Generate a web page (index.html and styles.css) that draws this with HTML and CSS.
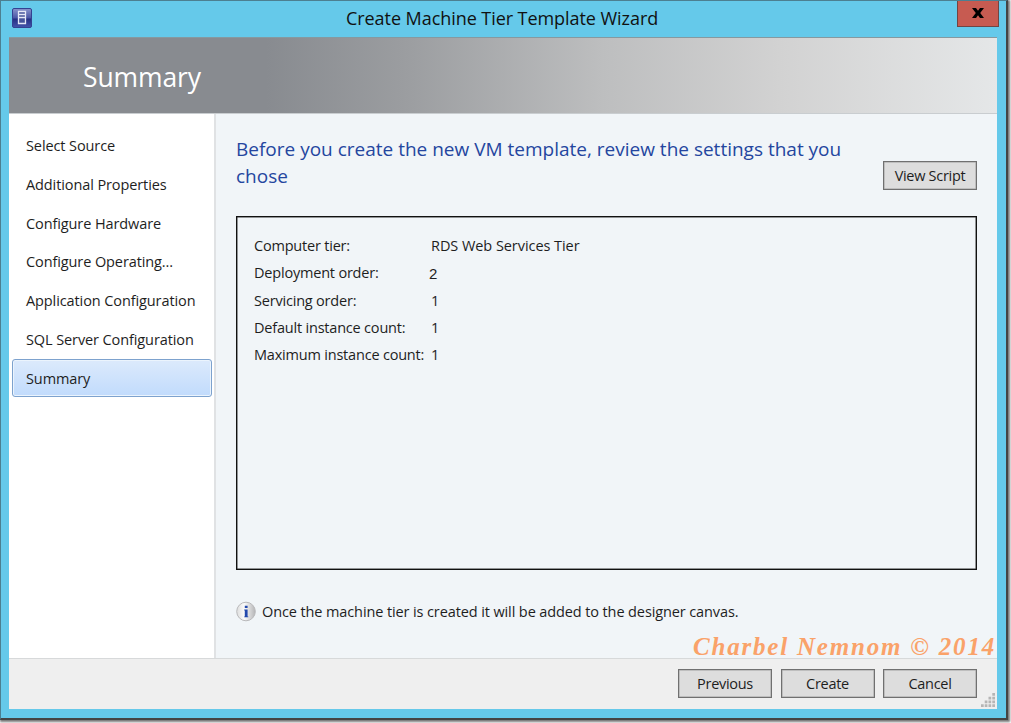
FILE: index.html
```html
<!DOCTYPE html>
<html lang="en">
<head>
<meta charset="utf-8">
<title>Create Machine Tier Template Wizard</title>
<link rel="stylesheet" href="styles.css">
</head>
<body>
<main class="window">
  <header class="titlebar">
    <svg class="app-icon" width="20" height="20" viewBox="0 0 20 20">
      <defs><linearGradient id="ig" x1="0" y1="0" x2="0" y2="1"><stop offset="0" stop-color="#8994cc"/><stop offset=".5" stop-color="#4956a6"/><stop offset=".55" stop-color="#252f83"/><stop offset="1" stop-color="#4355ac"/></linearGradient></defs>
      <rect x=".5" y=".5" width="19" height="19" rx="1.5" fill="url(#ig)" stroke="#344291"/>
      <path d="M6.5 3.5h7v12h-7zM6.5 6.5h7M6.5 9.5h7" fill="#46549b" stroke="#e6e9f7" stroke-width="1.3"/>
    </svg>
    <h1 class="title">Create Machine Tier Template Wizard</h1>
    <button class="close" aria-label="Close"><svg width="12" height="10" viewBox="0 0 12 10"><path d="M0 0h4l2 2.7L8 0h4L8.2 5l3.8 5H8L6 7.3 4 10H0l3.8-5z" fill="#000"/></svg></button>
  </header>
  <section class="client">
    <div class="banner"><h2 class="banner-title">Summary</h2></div>
    <div class="body">
      <nav class="steps">
        <a class="step">Select Source</a>
        <a class="step">Additional Properties</a>
        <a class="step">Configure Hardware</a>
        <a class="step">Configure Operating...</a>
        <a class="step">Application Configuration</a>
        <a class="step">SQL Server Configuration</a>
        <a class="step active">Summary</a>
      </nav>
      <section class="content">
        <div class="intro">
          <p class="lead">Before you create the new VM template, review the settings that you<br>chose</p>
          <button class="btn script">View Script</button>
        </div>
        <dl class="summary">
          <dt>Computer tier:</dt><dd class="tier">RDS Web Services Tier</dd>
          <dt>Deployment order:</dt><dd class="order">2</dd>
          <dt>Servicing order:</dt><dd>1</dd>
          <dt>Default instance count:</dt><dd>1</dd>
          <dt>Maximum instance count:</dt><dd>1</dd>
        </dl>
        <div class="note">
          <svg width="20" height="21" viewBox="0 0 20 21"><defs><linearGradient id="ng"><stop offset="0" stop-color="#ddd"/><stop offset=".4" stop-color="#fbfbfb"/><stop offset="1" stop-color="#b5b5b7"/></linearGradient></defs><circle cx="10" cy="10.5" r="9.3" fill="url(#ng)" stroke="#b9b9bb"/><path d="M8.8 4.8h2.8v2.2H8.8zM8.2 8.5h3.4v6.9h.7v.9H8.2v-.9h.6V9.4h-.6z" fill="#2349ad"/></svg>
          <span>Once the machine tier is created it will be added to the designer canvas.</span>
        </div>
      </section>
    </div>
    <footer class="footer">
      <button class="btn">Previous</button>
      <button class="btn">Create</button>
      <button class="btn">Cancel</button>
      <svg class="grip" width="14" height="14" viewBox="0 0 14 14" fill="#b5b5b5"><path d="M11.3 0H14v2.7h-2.7zM7.5 3.8h2.7v2.7H7.5zM11.3 3.8H14v2.7h-2.7zM3.7 7.6h2.7v2.7H3.7zM7.5 7.6h2.7v2.7H7.5zM11.3 7.6H14v2.7h-2.7zM0 11.3h2.7V14H0zM3.7 11.3h2.7V14H3.7zM7.5 11.3h2.7V14H7.5zM11.3 11.3H14V14h-2.7z"/></svg>
    </footer>
  </section>
  <div class="watermark">Charbel Nemnom © 2014</div>
</main>
</body>
</html>
```
FILE: styles.css
```css
* { box-sizing: border-box; }
body { margin: 0; height: 723px; overflow: hidden; background: #fff; font: 14.5px/20px "Open Sans", "Noto Sans", sans-serif; color: #1e1e1e; }
h1, h2, p, dl, dd { margin: 0; font-weight: 400; }
button { font: inherit; color: inherit; padding: 0; }
.window { position: relative; width: 1008px; height: 720px; padding: 0 9px 9px 8px; background: #65c9ea; border: 1px solid #4c7f91; border-right: 2px solid #444; border-bottom: 2px solid #444; box-shadow: 1px 1px 2px 1px #777; display: flex; flex-direction: column; }
.titlebar { height: 36px; display: flex; align-items: flex-start; flex: none; }
.app-icon { margin: 7px 0 0 3px; flex: none; }
.title { flex: 1; font-size: 18px; line-height: 24px; padding: 5px 0 0 314px; white-space: nowrap; letter-spacing: -.06px; color: #111; }
.close { width: 42px; height: 26px; margin-right: -2px; background: #c75b51; border: 1px solid #714543; border-top: 0; display: grid; place-items: center; flex: none; }
.close svg { margin-top: -2px; }
.client { width: 988px; height: 672px; display: flex; flex-direction: column; }
.banner { height: 77px; border-top: 1px solid #8599a0; border-bottom: 1px solid #c9cdd0; padding: 22px 0 0 74px; background: linear-gradient(90deg, #888b90 0, #888b90 26%, #9b9da0 40%, #bdbebf 60%, #d2d2d2 78%, #e5e7e8 100%); }
.banner-title { font-size: 26.5px; line-height: 34px; color: #fff; letter-spacing: -.1px; }
.body { height: 544px; display: flex; }
.steps { width: 207px; padding: 13px 3px 0; background: #fff; border-right: 2px solid #e0e2e4; }
.step { display: block; height: 38.8px; line-height: 38px; padding-left: 14px; white-space: nowrap; letter-spacing: -.1px; }
.active { width: 200px; height: 38px; margin-top: -1px; padding-left: 13px; border: 1px solid #7da2ce; border-radius: 3px; background: linear-gradient(#dceafc, #c1dbfc); box-shadow: inset 0 0 0 1px #ebf4fd; }
.content { flex: 1; padding: 22px 20px 0; background: #f1f5f8; }
.intro { display: flex; justify-content: space-between; height: 80px; }
.lead { font-size: 19px; line-height: 27.4px; color: #24469f; white-space: nowrap; }
.btn { width: 94px; height: 29px; border: 1px solid #707070; box-shadow: inset 0 0 0 .5px #a0a0a0; background: #ddd; letter-spacing: -.3px; line-height: 26px; flex: none; }
.script { margin-top: 25px; }
.summary { height: 354px; width: 741px; border: 1px solid #111; box-shadow: inset 0 0 0 .5px #333; padding: 15px 17px; display: grid; grid-template-columns: 177px 1fr; grid-auto-rows: 27.3px; align-content: start; line-height: 27px; letter-spacing: -.2px; white-space: nowrap; }
.tier { letter-spacing: -.06px; }
.order { font-family: "Liberation Sans", Arial, sans-serif; font-size: 15px; padding-top: 1px; margin-left: -2px; }
.note { display: flex; align-items: center; gap: 6px; margin-top: 31px; height: 21px; letter-spacing: -.11px; white-space: nowrap; }
.footer { position: relative; height: 51px; padding: 10px 20px 0 0; border-top: 1px solid #d7d9da; background: #efefef; display: flex; justify-content: flex-end; gap: 8.5px; }
.grip { position: absolute; right: 2px; bottom: 2px; }
.watermark { position: absolute; left: 692px; top: 631px; font: italic 700 25px/30px "Liberation Serif", "Times New Roman", serif; letter-spacing: 1.8px; color: #faa269; white-space: nowrap; }
```
